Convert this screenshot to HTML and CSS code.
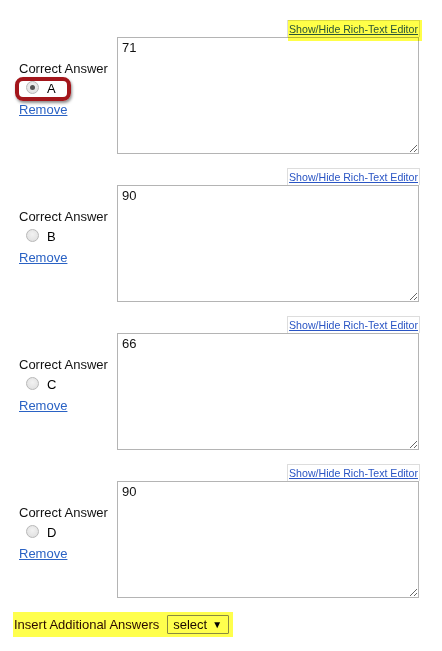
FILE: index.html
```html
<!DOCTYPE html>
<html>
<head>
<meta charset="utf-8">
<link rel="stylesheet" href="styles.css">
</head>
<body>
<main class="page">
  <section class="answer">
    <div class="side">
      <div class="label">Correct Answer</div>
      <div class="choice marked"><span class="radio checked"></span><span class="letter">A</span></div>
      <a class="remove" href="#">Remove</a>
    </div>
    <div class="editor">
      <a class="toggle highlight" href="#">Show/Hide Rich-Text Editor</a>
      <textarea class="text">71</textarea>
    </div>
  </section>
  <section class="answer">
    <div class="side">
      <div class="label">Correct Answer</div>
      <div class="choice"><span class="radio"></span><span class="letter">B</span></div>
      <a class="remove" href="#">Remove</a>
    </div>
    <div class="editor">
      <a class="toggle" href="#">Show/Hide Rich-Text Editor</a>
      <textarea class="text">90</textarea>
    </div>
  </section>
  <section class="answer">
    <div class="side">
      <div class="label">Correct Answer</div>
      <div class="choice"><span class="radio"></span><span class="letter">C</span></div>
      <a class="remove" href="#">Remove</a>
    </div>
    <div class="editor">
      <a class="toggle" href="#">Show/Hide Rich-Text Editor</a>
      <textarea class="text">66</textarea>
    </div>
  </section>
  <section class="answer">
    <div class="side">
      <div class="label">Correct Answer</div>
      <div class="choice"><span class="radio"></span><span class="letter">D</span></div>
      <a class="remove" href="#">Remove</a>
    </div>
    <div class="editor">
      <a class="toggle" href="#">Show/Hide Rich-Text Editor</a>
      <textarea class="text">90</textarea>
    </div>
  </section>
  <div class="insert">
    <span class="insert-label">Insert Additional Answers</span>
    <span class="select">select <span class="caret">&#9660;</span></span>
  </div>
</main>
</body>
</html>
```
FILE: styles.css
```css
html, body {
  margin: 0;
  padding: 0;
  background: #ffffff;
}
body {
  font-family: "Liberation Sans", Arial, sans-serif;
  font-size: 13px;
  color: #111111;
}
.page {
  padding: 20px 0 0 19px;
}
.answer {
  display: flex;
  align-items: center;
  margin-bottom: 14px;
}
.side {
  width: 98px;
  flex: none;
  padding-top: 5px;
}
.label {
  line-height: 16px;
  white-space: nowrap;
}
.choice {
  position: relative;
  display: flex;
  align-items: center;
  height: 24px;
  margin-top: 0;
  padding-left: 8px;
}
.choice.marked::after {
  content: "";
  position: absolute;
  left: -4px;
  top: 50%;
  width: 56px;
  height: 24px;
  transform: translateY(-50%);
  box-sizing: border-box;
  border: 4px solid #a3161b;
  border-radius: 8px;
  box-shadow: 1px 2px 3px rgba(0, 0, 0, 0.45);
}
.radio {
  width: 13px;
  height: 13px;
  box-sizing: border-box;
  border-radius: 50%;
  border: 1px solid #b8b8b8;
  background: radial-gradient(circle at 50% 40%, #f2f2f2 0%, #dcdcdc 100%);
  position: relative;
  flex: none;
  margin-left: -1px;
  margin-top: -3px;
}
.radio.checked::after {
  content: "";
  position: absolute;
  left: 3px;
  top: 3px;
  width: 5px;
  height: 5px;
  border-radius: 50%;
  background: #555555;
}
.letter {
  margin-left: 8px;
  line-height: 16px;
  color: #000;
}
.remove {
  display: block;
  margin-top: 1px;
  line-height: 16px;
  color: #2a62c4;
  text-decoration: underline;
  width: max-content;
}
.editor {
  width: 302px;
  display: flex;
  flex-direction: column;
  align-items: flex-end;
}
.toggle {
  position: relative;
  font-size: 10.6px;
  line-height: 13px;
  padding: 2px 1px 1px;
  border: 1px solid #dddddd;
  border-bottom: none;
  margin-right: -1px;
  color: #2a55c4;
  text-decoration: underline;
  white-space: nowrap;
}
.toggle.highlight::after {
  content: "";
  position: absolute;
  left: 0px;
  top: -1px;
  right: -3px;
  bottom: -4px;
  background: #ffff48;
  mix-blend-mode: multiply;
}
.text {
  display: block;
  width: 302px;
  height: 117px;
  box-sizing: border-box;
  margin: 0;
  border: 1px solid #b4b4b4;
  padding: 2px 4px;
  font-family: "Liberation Sans", Arial, sans-serif;
  font-size: 13px;
  color: #111;
  background: #fff;
  resize: both;
  outline: none;
}
.insert {
  display: inline-flex;
  align-items: center;
  height: 25px;
  margin-left: -6px;
  padding: 0 4px 0 1px;
  background: #ffff4d;
  color: #2a0a00;
}
.insert-label {
  white-space: nowrap;
}
.select {
  display: inline-flex;
  align-items: center;
  margin-left: 8px;
  height: 19px;
  box-sizing: border-box;
  padding: 0 6px 0 5px;
  border: 1px solid #8a8a40;
  border-radius: 1px;
  color: #1a0800;
  white-space: nowrap;
}
.caret {
  font-size: 10px;
  margin-left: 5px;
  color: #000;
}
```
